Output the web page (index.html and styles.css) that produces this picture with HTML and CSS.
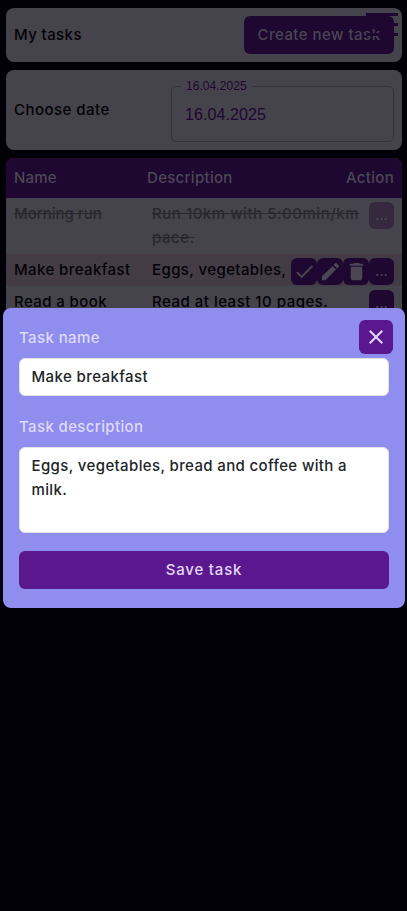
FILE: index.html
```html
<!DOCTYPE html>
<html lang="en">
<head>
<meta charset="utf-8">
<title>My tasks</title>
<link rel="stylesheet" href="styles.css">
</head>
<body>
<main class="page">
  <section class="card bar">
    <span class="t-my">My tasks</span>
    <button class="create"><span class="t-create">Create new task</span></button>
  </section>
  <div class="menu"><i></i><i></i><i></i></div>
  <section class="card date">
    <span class="t-choose">Choose date</span>
    <fieldset class="field"><legend>16.04.2025</legend><span>16.04.2025</span></fieldset>
  </section>
  <section class="table">
    <div class="head"><span class="t-name">Name</span><span class="t-desc">Description</span><span class="t-action">Action</span></div>
    <div class="row done"><span class="t-run">Morning run</span><span class="desc t-pace">Run 10km with 5:00min/km<br>pace.</span><div class="actions"><button>...</button></div></div>
    <div class="row odd"><span class="t-make">Make breakfast</span><span class="desc t-eggs">Eggs, vegetables,</span>
      <div class="actions">
        <button><svg viewBox="0 0 24 24"><path d="M9 16.17 4.83 12l-1.42 1.41L9 19 21 7l-1.41-1.41z"/></svg></button>
        <button><svg viewBox="0 0 24 24"><path d="M3 17.25V21h3.75L17.81 9.94l-3.75-3.75zM20.71 7.04a1 1 0 0 0 0-1.41l-2.34-2.34a1 1 0 0 0-1.41 0l-1.83 1.83 3.75 3.75z"/></svg></button>
        <button><svg viewBox="0 0 24 24"><path d="M6 19c0 1.1.9 2 2 2h8c1.100 0 2-.9 2-2V7H6zM19 4h-3.500l-1-1h-5l-1 1H5v2h14z"/></svg></button>
        <button>...</button>
      </div>
    </div>
    <div class="row"><span class="t-read">Read a book</span><span class="desc t-pages">Read at least 10 pages.</span><div class="actions"><button>...</button></div></div>
  </section>
</main>
<div class="modal">
  <button class="close"><svg viewBox="0 0 24 24"><path d="M19 6.410 17.590 5 12 10.590 6.410 5 5 6.410 10.590 12 5 17.590 6.410 19 12 13.410 17.590 19 19 17.590 13.410 12z"/></svg></button>
  <div class="label"><span class="t-tname">Task name</span></div>
  <div class="input name"><span class="t-make">Make breakfast</span></div>
  <div class="label second"><span class="t-tdesc">Task description</span></div>
  <div class="input area"><span class="t-long">Eggs, vegetables, bread and coffee with a<br>milk.</span></div>
  <button class="save"><span class="t-save">Save task</span></button>
</div>
</body>
</html>
```
FILE: styles.css
```css
* { box-sizing: border-box; }
body {
  margin: 0;
  height: 911px;
  overflow: hidden;
  background: #020107;
  color: #030208;
  font: 500 15px/24px Inter, sans-serif;
}
span { white-space: nowrap; }
button {
  border: 0;
  padding: 0;
  font: inherit;
  color: #4a4654;
  background: #1e0730;
  border-radius: 6px;
}
.page { padding: 8px 5px 0 6px; display: flex; flex-direction: column; gap: 8px; }
.card {
  background: #45434c;
  border-radius: 8px;
  padding: 0 8px;
  display: flex;
  align-items: center;
  justify-content: space-between;
}
.bar { height: 54px; }
.create { width: 150px; height: 38px; }
.menu { position: absolute; left: 366px; top: 13px; width: 32px; display: grid; gap: 7px; }
.menu i { height: 3px; background: #1e0730; }
.date { height: 80px; }
.field {
  width: 223px;
  height: 62px;
  margin: 2px 0 0;
  padding: 0 13px;
  border: 1px solid #36343b;
  border-radius: 5px;
  color: #1e0730;
  font: 400 16px/24px "Liberation Sans", sans-serif;
}
.field legend { font-size: 12px; line-height: 12px; padding: 0 5px; margin-left: -4px; letter-spacing: 0.06px; }
.field span { display: block; padding-top: 11px; letter-spacing: 0.1px; }
.table { border-radius: 8px 8px 0 0; overflow: hidden; background: #45434c; }
.head {
  height: 40px;
  padding: 0 8px;
  display: grid;
  grid-template-columns: 133px 1fr auto;
  align-items: center;
  background: #1e0730;
  color: #4c4856;
}
.row { position: relative; padding: 4px 8px; display: grid; grid-template-columns: 138px 1fr; }
.odd { background: #433c45; }
.done > span { color: #29282e; text-decoration: line-through; }
.done button { background: #36283f; }
.actions { position: absolute; right: 8px; top: 4px; display: flex; }
.actions button { width: 26px; height: 27px; display: grid; place-items: center; }
.actions button:last-child { width: 25px; font-size: 13px; font-weight: 600; padding-bottom: 2px; }
.actions svg { width: 23px; height: 23px; fill: #4a4654; }
.modal {
  position: absolute;
  left: 3px;
  top: 308px;
  width: 402px;
  height: 300px;
  padding: 18px 16px 0;
  border-radius: 8px;
  background: #8f8dee;
}
.close {
  position: absolute;
  right: 12px;
  top: 12px;
  width: 34px;
  height: 34px;
  display: grid;
  place-items: center;
  background: #5b178e;
}
.close svg { width: 24px; height: 24px; fill: #e0d9fb; }
.label { color: #dedafb; height: 24px; }
.second { margin-top: 19px; }
.input {
  margin-top: 8px;
  padding: 6px 12px 6px 11.5px;
  background: #fff;
  color: #212529;
  border: 1px solid #dee2e6;
  border-radius: 6px;
}
.name { height: 38px; }
.area { height: 86px; }
.save { width: 370px; height: 38px; margin-top: 18px; background: #5b178e; color: #e0d9fb; }
.t-my, .t-make, .t-eggs, .t-read, .t-tname { letter-spacing: 0.4px; }
.t-choose, .t-create { letter-spacing: 0.47px; }
.t-name { letter-spacing: 0.2px; }
.t-desc, .t-action { letter-spacing: 0.3px; }
.t-run { letter-spacing: 0; }
.t-pace { letter-spacing: 0.53px; }
.t-pages { letter-spacing: 0.5px; }
.t-tdesc, .t-long { letter-spacing: 0.37px; }
.t-save { letter-spacing: 0.8px; }
```
